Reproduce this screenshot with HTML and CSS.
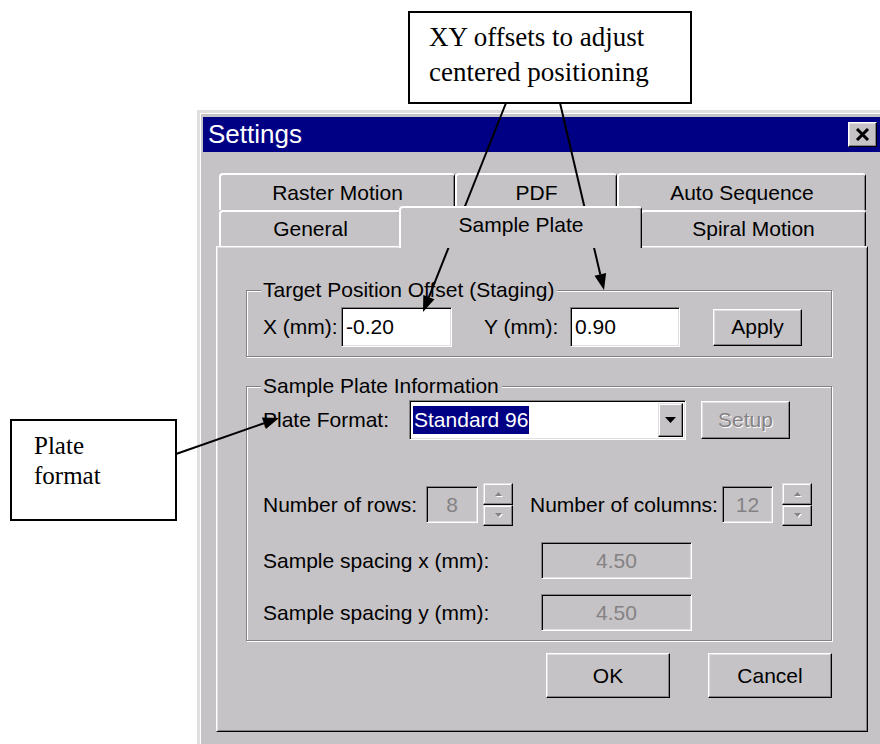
FILE: index.html
```html
<!DOCTYPE html>
<html lang="en">

<head>
    <meta charset="UTF-8">
    <title>Settings</title>
    <link rel="stylesheet" href="styles.css">
</head>

<body>
    <div class="page">

        <!-- Dialog -->
        <div class="dialog">
            <div class="titlebar">
                <span class="title">Settings</span>
                <div class="close">
                    <svg width="15" height="13" viewBox="0 0 15 13">
                        <path d="M2 1 L13 12 M13 1 L2 12" stroke="#000" stroke-width="3" fill="none" />
                    </svg>
                </div>
            </div>

            <div class="dialog-body">
                <div class="tab-row back">
                    <div class="tab tab-raster">Raster Motion</div>
                    <div class="tab tab-pdf">PDF</div>
                    <div class="tab tab-auto">Auto Sequence</div>
                </div>
                <div class="tab-row front">
                    <div class="tab tab-general">General</div>
                    <div class="tab tab-plate selected">Sample Plate</div>
                    <div class="tab tab-spiral">Spiral Motion</div>
                </div>

                <div class="panel">
                    <div class="group group-offset">
                        <div class="group-title">Target Position Offset (Staging)</div>
                        <div class="row row-offset">
                            <span class="lbl lbl-x">X (mm):</span>
                            <div class="edit edit-x">-0.20</div>
                            <span class="lbl lbl-y">Y (mm):</span>
                            <div class="edit edit-y">0.90</div>
                            <div class="btn btn-apply">Apply</div>
                        </div>
                    </div>

                    <div class="group group-plate">
                        <div class="group-title">Sample Plate Information</div>
                        <div class="row row-format">
                            <span class="lbl lbl-plate">Plate Format:</span>
                            <div class="edit combo">
                                <span class="combo-value">Standard 96</span>
                                <div class="combo-btn">
                                    <svg width="11" height="6" viewBox="0 0 11 6">
                                        <polygon points="0,0 11,0 5.5,6" fill="#000" />
                                    </svg>
                                </div>
                            </div>
                            <div class="btn btn-setup disabled">Setup</div>
                        </div>

                        <div class="row row-count">
                            <span class="lbl lbl-rows">Number of rows:</span>
                            <div class="edit off box-rows">8</div>
                            <div class="spin">
                                <div class="spin-btn"><svg width="7" height="4" viewBox="0 0 7 4"><polygon points="3.5,0 7,4 0,4" fill="#848284" /></svg></div>
                                <div class="spin-btn"><svg width="7" height="4" viewBox="0 0 7 4"><polygon points="0,0 7,0 3.5,4" fill="#848284" /></svg></div>
                            </div>
                            <span class="lbl lbl-cols">Number of columns:</span>
                            <div class="edit off box-cols">12</div>
                            <div class="spin spin-cols">
                                <div class="spin-btn"><svg width="7" height="4" viewBox="0 0 7 4"><polygon points="3.5,0 7,4 0,4" fill="#848284" /></svg></div>
                                <div class="spin-btn"><svg width="7" height="4" viewBox="0 0 7 4"><polygon points="0,0 7,0 3.5,4" fill="#848284" /></svg></div>
                            </div>
                        </div>

                        <div class="row row-spacing-x">
                            <span class="lbl lbl-spacing">Sample spacing x (mm):</span>
                            <div class="edit off box-spacing">4.50</div>
                        </div>
                        <div class="row row-spacing-y">
                            <span class="lbl lbl-spacing">Sample spacing y (mm):</span>
                            <div class="edit off box-spacing">4.50</div>
                        </div>
                    </div>

                    <div class="actions">
                        <div class="btn btn-ok">OK</div>
                        <div class="btn btn-cancel">Cancel</div>
                    </div>
                </div>
            </div>
        </div>

        <!-- Annotations -->
        <div class="callout callout-xy">XY offsets to adjust<br>centered positioning</div>
        <div class="callout callout-plate">Plate<br>format</div>

        <svg class="arrows" width="880" height="744" viewBox="0 0 880 744">
            <line x1="506" y1="103" x2="428.9" y2="297.1" stroke="#000" stroke-width="2" />
            <polygon points="423,312 434.5,299.3 423.3,294.9" fill="#000" />
            <line x1="560" y1="103" x2="600.3" y2="274.4" stroke="#000" stroke-width="2" />
            <polygon points="604,290 606.1,273 594.5,275.8" fill="#000" />
            <line x1="176" y1="454" x2="263.9" y2="423.3" stroke="#000" stroke-width="2" />
            <polygon points="279,418 265.9,429 261.9,417.6" fill="#000" />
        </svg>
    </div>
</body>

</html>
```

FILE: styles.css
```css
/* Reset */
* {
    margin: 0;
    padding: 0;
    box-sizing: border-box;
}

body {
    background: #fff;
    font-family: "Liberation Sans", Arial, sans-serif;
    color: #000;
}

.page {
    position: relative;
    width: 880px;
    height: 744px;
    overflow: hidden;
}

/* Dialog frame */
.dialog {
    width: 689px;
    height: 660px;
    margin: 110px 0 0 197px;
    padding: 4px 3px 3px 3px;
    background: #c6c3c6;
    border: 3px solid;
    border-color: #dfdfdf #000 #000 #dfdfdf;
    box-shadow: inset 1px 1px #fff, inset -1px -1px #848284;
}

.titlebar {
    display: flex;
    align-items: center;
    justify-content: space-between;
    height: 35px;
    padding: 0 3px 0 5px;
    background: #000084;
    color: #fff;
}

.title {
    font-size: 26px;
}

.close {
    display: flex;
    align-items: center;
    justify-content: center;
    width: 29px;
    height: 25px;
    background: #c6c3c6;
    border: 1px solid;
    border-color: #fff #000 #000 #fff;
    box-shadow: inset -1px -1px #848284, inset 1px 1px #dfdfdf;
}

.dialog-body {
    padding: 21px 12px 0 13px;
}

/* Tabs */
.tab-row {
    display: flex;
    margin-left: 3px;
}

.tab-row.back {
    height: 37px;
}

.tab-row.front {
    height: 36px;
}

.tab {
    display: flex;
    align-items: center;
    justify-content: center;
    font-size: 21px;
    background: #c6c3c6;
    border-top: 2px solid #fff;
    border-left: 2px solid #fff;
    border-right: 1px solid #000;
    box-shadow: inset -1px 0 #848284;
    border-radius: 4px 4px 0 0;
}

.tab-raster { width: 236px; }
.tab-pdf { width: 162px; }
.tab-auto { width: 249px; }
.tab-general { width: 182px; }
.tab-spiral { width: 226px; }

.tab-plate {
    width: 243px;
}

.tab.selected {
    height: 42px;
    margin: -4px -2px -2px -2px;
    padding-bottom: 6px;
    position: relative;
    z-index: 1;
}

/* Tab page */
.panel {
    height: 486px;
    padding: 43px 35px 0 29px;
    border: 1px solid;
    border-color: #fff #000 #000 #fff;
    box-shadow: inset 1px 1px #dfdfdf, inset -1px -1px #848284;
}

/* Group boxes */
.group {
    border: 1px solid #848284;
    box-shadow: inset 1px 1px #fff, 1px 1px #fff;
    padding: 0 0 9px 16px;
}

.group-title {
    width: fit-content;
    margin: -13px 0 0 -2px;
    padding: 0 3px 0 2px;
    font-size: 21px;
    line-height: 24px;
    background: #c6c3c6;
}

.group-plate {
    margin-top: 29px;
}

.row {
    display: flex;
    align-items: center;
    font-size: 21px;
}

.row-offset {
    margin-top: 5px;
}

.row-format {
    margin-top: 2px;
}

.row-count {
    margin-top: 43px;
}

.row-spacing-x {
    margin-top: 16px;
}

.row-spacing-y {
    margin-top: 15px;
}

.lbl {
    white-space: nowrap;
}

.lbl-x { width: 78px; }
.lbl-y { width: 86px; margin-left: 32px; }
.lbl-plate { width: 146px; }
.lbl-rows { width: 163px; }
.lbl-cols { width: 192px; margin-left: 17px; }
.lbl-spacing { width: 278px; }

/* Sunken edit fields */
.edit {
    display: flex;
    align-items: center;
    height: 40px;
    padding-left: 4px;
    background: #fff;
    border: 1px solid;
    border-color: #848284 #fff #fff #848284;
    box-shadow: inset 1px 1px #000, inset -1px -1px #dfdfdf;
}

.edit-x { width: 111px; }
.edit-y { width: 110px; }

.edit.off {
    justify-content: center;
    padding-left: 0;
    height: 37px;
    background: #c6c3c6;
    color: #848284;
}

.box-rows { width: 52px; }
.box-cols { width: 51px; }
.box-spacing { width: 151px; }

/* Combo box */
.combo {
    width: 277px;
    padding: 2px;
    justify-content: space-between;
    align-items: stretch;
}

.combo-value {
    display: flex;
    align-items: center;
    margin: 3px 0 3px 1px;
    padding: 0 1px;
    background: #000084;
    color: #fff;
}

.combo-btn {
    display: flex;
    align-items: center;
    justify-content: center;
    width: 25px;
    background: #c6c3c6;
    border: 1px solid;
    border-color: #dfdfdf #000 #000 #dfdfdf;
    box-shadow: inset -1px -1px #848284, inset 1px 1px #fff;
}

/* Spinners */
.spin {
    display: flex;
    flex-direction: column;
    width: 30px;
    height: 43px;
    margin-left: 5px;
}

.spin-cols {
    margin-left: 9px;
}

.spin-btn {
    display: flex;
    align-items: center;
    justify-content: center;
    flex: 1;
    background: #c6c3c6;
    border: 1px solid;
    border-color: #dfdfdf #000 #000 #dfdfdf;
    box-shadow: inset -1px -1px #848284, inset 1px 1px #fff;
}

.spin-btn svg {
    filter: drop-shadow(1px 1px 0 #fff);
}

/* Push buttons */
.btn {
    display: flex;
    align-items: center;
    justify-content: center;
    height: 37px;
    font-size: 21px;
    background: #c6c3c6;
    border: 1px solid;
    border-color: #fff #000 #000 #fff;
    box-shadow: inset -1px -1px #848284, inset 1px 1px #dfdfdf;
}

.btn.disabled {
    color: #848284;
    text-shadow: 1px 1px 0 #fff;
}

.btn-apply {
    width: 89px;
    margin-left: 33px;
}

.btn-setup {
    width: 89px;
    height: 38px;
    margin-left: 15px;
}

.actions {
    display: flex;
    justify-content: flex-end;
    gap: 38px;
    margin-top: 12px;
}

.btn-ok,
.btn-cancel {
    width: 124px;
    height: 45px;
}

/* Annotations */
.callout {
    position: absolute;
    background: #fff;
    border: 2px solid #000;
    font-family: "Liberation Serif", "Times New Roman", serif;
}

.callout-xy {
    left: 408px;
    top: 11px;
    width: 284px;
    height: 93px;
    padding: 7px 0 0 19px;
    font-size: 27px;
    line-height: 35px;
}

.callout-plate {
    left: 10px;
    top: 419px;
    width: 167px;
    height: 102px;
    padding: 10px 0 0 22px;
    font-size: 25px;
    line-height: 30px;
}

.arrows {
    position: absolute;
    left: 0;
    top: 0;
    pointer-events: none;
}
```
